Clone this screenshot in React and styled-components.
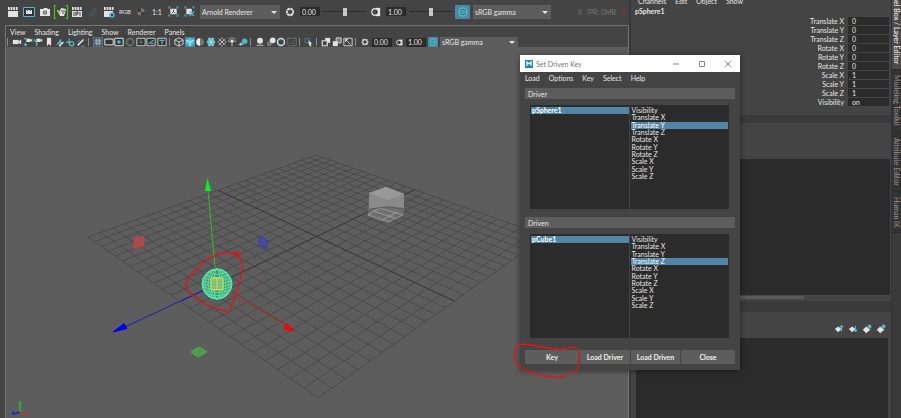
import styled, { createGlobalStyle } from 'styled-components';

const GlobalStyle = createGlobalStyle`
  * {
    box-sizing: border-box;
  }
  html,
  body {
    margin: 0;
    padding: 0;
    background: #444444;
  }
  body,
  button,
  input,
  select {
    font-family: Lato, 'Open Sans', 'Noto Sans', sans-serif;
    font-size: 7px;
    line-height: 8px;
    color: #e6e6e6;
  }
  button,
  input,
  select {
    margin: 0;
    padding: 0;
    border: 0;
    border-radius: 0;
    outline: none;
  }
`;

const Page = styled.div`
  position: relative;
  display: grid;
  grid-template-columns: minmax(0, 1fr) 262px 10px;
  min-height: 100vh;
  overflow: hidden;
  background: #444444;
`;

const Workspace = styled.main`
  display: flex;
  flex-direction: column;
  min-width: 0;
`;

const Shelf = styled.div`
  display: flex;
  align-items: center;
  gap: 3px;
  height: 23px;
  padding-left: 5px;
  overflow: hidden;
`;

const ShelfIcons = styled.div`
  display: flex;
`;

const IconButton = styled.button`
  display: flex;
  align-items: center;
  justify-content: center;
  flex: none;
  width: ${props => props.$w || 10}px;
  height: ${props => props.$h || 10}px;
  font-size: ${props => (props.$small ? 6 : 7)}px;
  background: ${props => (props.$on ? '#5285a6' : 'transparent')};
  opacity: ${props => (props.$dim ? 0.3 : 1)};
  svg {
    display: block;
    flex: none;
  }
`;

const NumberField = styled.input`
  flex: none;
  width: 20px;
  height: 9px;
  padding-left: 2px;
  background: #2b2b2b;
`;

const Slider = styled.input`
  appearance: none;
  flex: none;
  width: 43px;
  height: 10px;
  background: linear-gradient(#2a2a2a, #2a2a2a) center / 100% 1px no-repeat;
  &::-webkit-slider-thumb {
    appearance: none;
    width: 4px;
    height: 8px;
    background: #c8c8c8;
  }
`;

const Combo = styled.label`
  position: relative;
  flex: none;
  display: block;
  width: ${props => props.$w || 78}px;
  height: ${props => props.$h || 10}px;
  background: #5d5d5d;
  select {
    appearance: none;
    display: block;
    width: 100%;
    height: 100%;
    padding-left: 2px;
    background: transparent;
  }
  &::after {
    content: '';
    position: absolute;
    right: 3px;
    top: calc(50% - 1px);
    border: 3px solid transparent;
    border-top-color: #e4e4e4;
    border-bottom: 0;
    pointer-events: none;
  }
`;

const RenderStatus = styled.div`
  display: flex;
  align-items: center;
  gap: 5px;
  margin-left: 24px;
  color: #777777;
`;

const StatusDot = styled.span`
  width: 5px;
  height: 5px;
  border-radius: 1px;
  background: #693c3c;
`;

const Panel = styled.section`
  display: flex;
  flex: 1;
  flex-direction: column;
  margin: 2px 0 0 5px;
  border: solid #747474;
  border-width: 1px 1px 0 1px;
`;

const MenuBar = styled.nav`
  display: flex;
  align-items: center;
  gap: ${props => props.$gap || 9}px;
  height: 11px;
  padding-left: ${props => props.$left || 4}px;
  button {
    background: transparent;
    white-space: nowrap;
  }
`;

const PanelTools = styled.div`
  display: flex;
  align-items: center;
  gap: 2px;
  height: 10px;
  padding-left: 1px;
`;

const IconGroup = styled.div`
  display: flex;
  flex: none;
  justify-content: space-between;
  width: ${props => props.$w}px;
`;

const Divider = styled.span`
  flex: none;
  width: 3px;
  height: 8px;
  border-left: 1px solid #8c8c8c;
`;

const Scene = styled.div`
  flex: 1;
  min-height: 0;
  background: #5d5d5d;
  svg {
    display: block;
    width: 100%;
    height: auto;
  }
`;

const Sidebar = styled.aside`
  display: flex;
  flex-direction: column;
  border-left: 2px solid #393939;
`;

const ChannelMenu = styled.nav`
  display: flex;
  align-items: flex-end;
  gap: 9px;
  height: 5px;
  padding-left: 7px;
  overflow: hidden;
  button {
    flex: none;
    height: 9px;
    background: transparent;
  }
`;

const ChannelBox = styled.div`
  height: 110px;
  padding-left: 4px;
`;

const ObjectName = styled.div`
  height: 11px;
  padding-top: 2px;
  font-weight: 700;
`;

const ChannelRow = styled.label`
  display: flex;
  align-items: center;
  justify-content: flex-end;
  gap: 4px;
  height: 9px;
  padding-right: 2px;
  input {
    width: 41px;
    height: 8px;
    padding-left: 4px;
    background: #2b2b2b;
  }
`;

const Band = styled.div`
  flex: none;
  height: ${props => props.$h}px;
  background: ${props => props.$bg || '#444444'};
`;

const Well = styled.div`
  flex: ${props => (props.$h ? 'none' : 1)};
  height: ${props => (props.$h ? props.$h + 'px' : 'auto')};
  margin: 0 ${props => props.$right || 0}px 0 5px;
  background: #2b2b2b;
`;

const ScrollTrack = styled.div`
  height: 6px;
  padding: 1px 87px 2px 5px;
  background: #444444;
  &::before {
    content: '';
    display: block;
    height: 3px;
    background: #5a5a5a;
  }
`;

const LayerTools = styled.div`
  display: flex;
  align-items: center;
  justify-content: flex-end;
  gap: 4px;
  height: 26px;
  padding: 8px 5px 0 0;
`;

const SideTabs = styled.div`
  display: flex;
  flex-direction: column;
  border-left: 1px solid #333333;
  background: #3a3a3a;
`;

const SideTab = styled.button`
  display: flex;
  justify-content: ${props => (props.$on ? 'flex-end' : 'center')};
  align-items: center;
  height: ${props => props.$h}px;
  padding-bottom: ${props => (props.$on ? 5 : 0)}px;
  overflow: hidden;
  writing-mode: vertical-rl;
  white-space: nowrap;
  font-weight: ${props => (props.$on ? 700 : 400)};
  color: ${props => (props.$on ? '#dcdcdc' : '#969696')};
  background: ${props => (props.$on ? '#4a4a4a' : '#333333')};
  border-bottom: 1px solid #2b2b2b;
`;

/* floating window */
const Dialog = styled.section`
  position: absolute;
  left: 520px;
  top: 55px;
  width: 220px;
  background: #444444;
  box-shadow: 0 1px 6px rgba(0, 0, 0, 0.45);
`;

const TitleBar = styled.header`
  display: flex;
  align-items: center;
  gap: 3px;
  height: 17px;
  padding: 0 7px 0 5px;
  background: #ffffff;
  color: #777777;
`;

const Title = styled.h1`
  flex: 1;
  margin: 0;
  font-size: 7px;
  font-weight: 400;
`;

const WindowButtons = styled.div`
  display: flex;
  gap: 16px;
`;

const DialogBody = styled.div`
  padding: 5px 5px 6px;
`;

const FrameTitle = styled.h2`
  height: 11px;
  margin: 0;
  padding: 2px 3px 0;
  font-size: 7px;
  font-weight: 400;
  background: #5d5d5d;
`;

const ListPair = styled.div`
  display: grid;
  grid-template-columns: 1fr 1fr;
  gap: 2px;
  height: 104px;
  margin: 6px 6px 8px 5px;
  padding: 2px 1px 1px;
  background: linear-gradient(#444444, #444444) center / 1px 100% no-repeat #2b2b2b;
`;

const List = styled.ul`
  display: grid;
  grid-template-rows: repeat(10, 1fr);
  height: 73px;
  margin: 0;
  padding: 0;
  list-style: none;
  li {
    display: grid;
    min-height: 0;
  }
`;

const ListItem = styled.button`
  display: flex;
  align-items: center;
  min-height: 0;
  padding-left: 1px;
  line-height: 7px;
  font-weight: ${props => (props.$bold ? 700 : 400)};
  color: ${props => (props.$on ? '#ffffff' : '#e6e6e6')};
  background: ${props => (props.$on ? '#5285a6' : 'transparent')};
`;

const ButtonRow = styled.div`
  display: grid;
  grid-template-columns: 55fr 51fr 50fr 55fr;
  gap: 1px;
  margin-top: 12px;
`;

const ActionButton = styled.button`
  height: 14px;
  font-weight: 700;
  color: #eeeeee;
  background: #5d5d5d;
`;

const PenMark = styled.svg`
  position: absolute;
  left: -10px;
  bottom: -12px;
  pointer-events: none;
`;

const L = '#e2e2e2';
const T = '#4fb9cc';

const shapes = {
  clap: <><path d="M1 5h10v6H1z" fill={L} /><path d="M1 2.500h10" stroke={L} strokeWidth="3" strokeDasharray="1.800 .8" /></>,
  frame: <><path d="M.5 1.500h11v9H.5z" fill="#333" stroke={T} /><path d="M3 4h6v4H3z" fill={L} /><path d="M4.500 3v2M7.500 3v2" stroke="#555" /></>,
  photo: <><path d="M1 3h3l1-1h3l1 1h2v7H1z" fill={L} /><circle cx="6" cy="6.500" r="2" fill="#444" /><circle cx="6" cy="6.500" r="1" fill={L} /></>,
  arnold: <><path d="M1.500-.5H-.5v13h2M10.500-.5h2v13h-2" stroke="#43c522" fill="none" strokeWidth="1.200" /><path d="M2 4l3 1 1-3 5 1-1 4-1 3H5z" fill={L} /><path d="M1.500 4l4 2-1 3z" fill="#d2a63c" /><path d="M6 5h4M7 7h2" stroke="#555" /></>,
  ipr: <><path d="M1 5h10v6H1z" fill={L} /><path d="M1 2.500h10" stroke={L} strokeWidth="3" strokeDasharray="1.800 .8" /><path d="M3 6v4M5 10V6h2v2H5M9 6v4" stroke="#444" fill="none" /></>,
  clip: <path d="M3 8l4-5c2-1 3 1 2 2L5 10C3 11 1 9 3 8z" fill="none" stroke={T} />,
  settings: <><path d="M1 5h9v6H1z" fill={L} /><path d="M1 2.500h10" stroke={L} strokeWidth="3" strokeDasharray="1.800 .8" /><circle cx="9" cy="9" r="2" fill="#444" stroke={T} strokeWidth="1.500" /></>,
  checker: <><circle cx="6" cy="6" r="4.500" fill="#333" /><path d="M6 1.500a4.500 4.500 0 0 1 4.500 4.500H6zM6 10.500A4.500 4.500 0 0 1 1.500 6H6z" fill="#eee" /></>,
  region: <><path d="M1 3V1h2M9 1h2v2M11 9v2H9M3 11H1V9" stroke={T} fill="none" /><path d="M2.500 3h7v6h-7z" fill={L} /><path d="M6 4v2M4 8l2-2 2 2" stroke="#444" fill="none" /></>,
  regionOff: <><path d="M1 3V1h2M9 1h2v2M3 11H1V9" stroke={T} fill="none" /><path d="M2.500 3h6v6h-6z" fill={L} /><path d="M6 6l5 5M11 6l-5 5" stroke={T} strokeWidth="1.400" /></>,
  aperture: <><circle cx="6" cy="6" r="3.800" fill="none" stroke={L} strokeWidth="2.400" /><path d="M5 0l2 3M11 3L8 5M12 8L9 7M7 12L5 9M1 9l3-2M0 4l4 1" stroke="#444" strokeWidth=".8" /></>,
  gamma: <><path d="M5 1h6v10H5z" fill={L} /><path d="M5 3a3 3 0 0 1 0 6z" fill="#333" /><path d="M5 2a4 4 0 0 0 0 8" fill="none" stroke={L} strokeWidth="1.500" /></>,
  color: <><circle cx="6" cy="6" r="4.800" fill="#47707f" stroke="#3be0e0" strokeWidth="1.300" /><path d="M3 4.800h6M3 7.300h6" stroke="#3be0e0" strokeWidth="1.200" /></>,
  cam: <><path d="M1 3.500h7v5H1z" fill={L} /><path d="M7 6l4-3v6z" fill={L} /></>,
  camLock: <><path d="M4 2h5v4H4z" fill={L} /><path d="M8 4l3-2v4z" fill={L} /><path d="M1 2h3M3 7v4M1 9h4" stroke={T} strokeWidth="1.500" /></>,
  camAttr: <><path d="M4 2h5v4H4z" fill={L} /><path d="M8 4l3-2v4z" fill={L} /><path d="M1 3l4 5-1 3" stroke={T} strokeWidth="1.500" fill="none" /></>,
  bookmark: <path d="M3.500 1h5v10L6 8.500 3.500 11z" fill={L} />,
  plane: <><path d="M1 10L7 2l1 5z" fill={T} /><path d="M5 11l5-5" stroke={L} strokeWidth="2" /></>,
  pan: <><path d="M5 2v7M1 6h6" stroke={T} strokeWidth="1.500" /><circle cx="8" cy="8" r="2.500" fill="none" stroke={T} strokeWidth="1.500" /></>,
  pencil: <><path d="M2 10L9 3" stroke={L} strokeWidth="2" /><path d="M2 6l2-2M6 11h4" stroke={T} /></>,
  gridIcon: <><path d="M1.500 1.500h9v9h-9z" fill="#6c7d88" stroke="#333" /><path d="M1.500 4.500h9M1.500 7.500h9M4.500 1.500v9M7.500 1.500v9" stroke="#aebbc4" strokeWidth=".7" /></>,
  gate: <path d="M1 2.500h10v7H1z" fill="#333" stroke={L} strokeWidth="1.200" />,
  resGate: <><path d="M1 1.500h10v9H1z" fill="#333" stroke={L} strokeWidth="1.200" /><circle cx="6" cy="6" r="2.200" fill={T} /></>,
  chart: <><path d="M1 1.500h10v9H1z" fill="#333" stroke={L} /><path d="M3 6h6M6 3v6" stroke={T} strokeDasharray="2 1" /></>,
  action: <><path d="M1 1.500h10v9H1z" fill="#333" stroke={L} /><path d="M3 8l6-4M6 8h3" stroke={T} strokeWidth="1.500" /></>,
  title: <><path d="M1 1.500h10v9H1z" fill="#333" stroke={L} /><path d="M3 4h6M6 4v5" stroke={T} strokeWidth="1.500" /></>,
  cube: <path d="M6 1l5 2.500v5L6 11 1 8.500v-5zM1 3.500L6 6l5-2.500M6 6v5" fill="none" stroke={L} />,
  solid: <><path d="M6 1l5 2.500v5L6 11 1 8.500v-5z" fill="#45c8dc" /><path d="M1 3.500L6 6l5-2.500M6 6v5" stroke="#d5f5fa" fill="none" /></>,
  shade: <><circle cx="6" cy="6" r="4.500" fill="#777" /><path d="M6 1.500a4.500 4.500 0 0 0 0 9z" fill="#eee" /></>,
  texture: <><path d="M3 1h6l2 5-2 5H3L1 6z" fill={T} /><path d="M3 1l6 10M9 1L3 11M1 6h10" stroke={L} strokeWidth=".7" /></>,
  mesh: <path d="M6 1l5 5-5 5-5-5zM3.500 3.500l5 5M8.500 3.500l-5 5M2 2l8 8M10 2l-8 8" stroke={L} fill="none" strokeWidth=".7" />,
  light: <><circle cx="6" cy="5" r="2" fill={L} /><path d="M6 0v2M1 5h2M9 5h2M2 1l2 2M10 1L8 3M6 7v4" stroke={L} /></>,
  shadow: <><circle cx="8" cy="5" r="3.200" fill={T} /><path d="M0 9l5-3 2 4z" fill={T} /><circle cx="3" cy="9" r="1.200" fill={L} /></>,
  ao: <><circle cx="6" cy="4.500" r="3.500" fill={L} /><path d="M2 10h8" stroke="#aaa" strokeWidth="1.500" /></>,
  blur: <><circle cx="4" cy="8" r="3" fill="#777" /><circle cx="8" cy="4" r="3.500" fill={L} /></>,
  ring: <circle cx="6" cy="6" r="4.200" fill="none" stroke="#bfe2e8" strokeWidth="1.800" />,
  isolate: <><path d="M1 2h6v5H1z" stroke={T} fill="none" strokeDasharray="1 1" /><path d="M5 4l5 4H8l1 3H7L6 9z" fill={L} /></>,
  copy: <><path d="M5 1h6v6H5z" fill={L} /><path d="M1.500 4.500h6v6h-6z" fill="#444" stroke={L} strokeWidth="1.400" /></>,
  copyFill: <><path d="M5 1h6v6H5z" fill="#777" stroke={L} /><path d="M1 5h6v6H1z" fill={L} /></>,
  expand: <><path d="M1 1.500h10v9H1z" fill="none" stroke={L} /><path d="M3 3l6 6M6 3H3v3" stroke={L} fill="none" /></>,
  layer: <><path d="M1 6l4-3 4 3-4 4z" fill={L} /><path d="M9 2v7M7 4l2-2 2 2" stroke={T} strokeWidth="1.400" fill="none" /></>,
  layerDown: <><path d="M1 6l4-3 4 3-4 4z" fill={L} /><path d="M9 2v7M7 7l2 2 2-2" stroke={T} strokeWidth="1.400" fill="none" /></>,
  layerAdd: <><path d="M1 7l4-4 5 4-5 4z" fill={L} /><circle cx="9" cy="3" r="2.300" fill={T} /></>,
};

const Icon = ({ name, size = 10 }) => (
  <svg width={size} height={size} viewBox="0 0 12 12" overflow="visible" aria-hidden="true">
    {shapes[name]}
  </svg>
);

const Tool = ({ name, size, ...rest }) => (
  <IconButton type="button" aria-label={name} {...rest}>
    <Icon name={name} size={size} />
  </IconButton>
);

const Tools = ({ names, w, on, dim }) => (
  <IconGroup $w={w}>
    {names.map(name => (
      <Tool key={name} name={name} $on={name === on} $dim={name === dim} />
    ))}
  </IconGroup>
);

const Picker = ({ label, value, w, h }) => (
  <Combo $w={w} $h={h}>
    <select aria-label={label} defaultValue={value}>
      <option>{value}</option>
    </select>
  </Combo>
);

// ground plane corners: left, top, right, bottom
const corners = [[88, 237], [316, 155], [546, 236], [318, 398]];

const project = (u, v) => {
  const [[x0, y0], [x1, y1], [x2, y2], [x3, y3]] = corners;
  const dx1 = x1 - x2;
  const dx2 = x3 - x2;
  const sx = x0 - x1 + x2 - x3;
  const dy1 = y1 - y2;
  const dy2 = y3 - y2;
  const sy = y0 - y1 + y2 - y3;
  const det = dx1 * dy2 - dx2 * dy1;
  const g = (sx * dy2 - dx2 * sy) / det;
  const h = (dx1 * sy - sx * dy1) / det;
  const d = g * u + h * v + 1;
  return [
    ((x1 - x0 + g * x1) * u + (x3 - x0 + h * x3) * v + x0) / d,
    ((y1 - y0 + g * y1) * u + (y3 - y0 + h * y3) * v + y0) / d,
  ];
};

const segment = (a, b) => `M${a.join(' ')}L${b.join(' ')}`;

const CELLS = 24;
const steps = Array.from({ length: CELLS + 1 }, (_, i) => i / CELLS);
const gridPath = steps
  .map(t => segment(project(t, 0), project(t, 1)) + segment(project(0, t), project(1, t)))
  .join('');
const axisPath = segment(project(0.5, 0), project(0.5, 1)) + segment(project(0, 0.5), project(1, 0.5));

const Viewport = () => (
  <Scene>
    <svg viewBox="6 47 622 371" role="img" aria-label="persp">
      <path d={gridPath} stroke="#434343" strokeWidth=".7" />
      <path d={axisPath} stroke="#393939" />

      <path d="M369 193l17-6 18 7v20l-16 8-20-7z" fill="#888" opacity=".5" />
      <path d="M369 193l17-6 18 7v14l-16-2-19 3z" fill="#8a8a8a" />
      <path d="M369 193l17-6 18 7-16 6z" fill="#999" />
      <path d="M368 215l11-7 24 7-15 7zM373 211l22 7M383 220l14-8" fill="none" stroke="#a2a2a2" strokeWidth=".8" />
      <path d="M369 209l19-2 16 2" fill="none" stroke="#555" strokeWidth=".7" />

      <path d="M215 268L208 190" stroke="#3fb62c" />
      <path d="M207.500 178l3.500 13h-6z" fill="#00f51a" />
      <path d="M206 289L125 327" stroke="#1c1cb0" />
      <path d="M113 332l11-8.500 3 5z" fill="#0000f0" stroke="#0000f0" />
      <path d="M229 292L286 325" stroke="#c22020" />
      <path d="M295 332l-12-3 4-6z" fill="#ff0000" />
      <path d="M134 238l10-2v10l-10 3z" fill="#a84c4c" stroke="#b84444" />
      <path d="M259 236l8 4v9l-8-4z" fill="#4a4a9c" stroke="#3c3ca8" />
      <path d="M191 352l8-5 8 5-9 5z" fill="#4c9e4c" stroke="#4cb44c" />

      <circle cx="217" cy="284" r="15" fill="#4c9476" stroke="#5af0ac" />
      <g fill="none" stroke="#56efad" strokeWidth=".8">
        {[3, 6, 9, 12, 14].map(r => <ellipse key={r} cx="217" cy="284" rx={r} ry="15" />)}
        {[-12, -9, -6, -3, 0, 3, 6, 9, 12].map(y => {
          const r = Math.sqrt(225 - y * y);
          return <path key={y} d={`M${217 - r} ${284 + y}Q217 ${289 + y} ${217 + r} ${284 + y}`} />;
        })}
      </g>
      <path d="M211 278h12v12h-12zM217 278v12" fill="#8ec47c" fillOpacity=".7" stroke="#e5e53c" />
      <path
        d="M241 255L233 253Q220 251 207 260Q194 270 185 284Q188 292 192 295Q207 307 228 312Q231 310 234 299Q242 280 242 265L239 256L235 251M241 253L234 257"
        fill="none"
        stroke="#df1519"
        strokeWidth="1.300"
      />

      <path d="M20 412V401" stroke="#2cae34" strokeWidth="2" />
      <path d="M20 412l-6 2M13 411v4" stroke="#2222c2" strokeWidth="1.500" />
      <path d="M20 413l7 1M24 411l3 4M27 411l-3 4" stroke="#c83030" />
    </svg>
  </Scene>
);

const shelfLeft = ['clap', 'frame', 'photo', 'arnold', 'ipr', 'clip', 'settings'];

const attributes = [
  'Visibility', 'Translate X', 'Translate Y', 'Translate Z', 'Rotate X',
  'Rotate Y', 'Rotate Z', 'Scale X', 'Scale Y', 'Scale Z',
];

const channels = [
  ['Translate X', '0'], ['Translate Y', '0'], ['Translate Z', '0'],
  ['Rotate X', '0'], ['Rotate Y', '0'], ['Rotate Z', '0'],
  ['Scale X', '1'], ['Scale Y', '1'], ['Scale Z', '1'], ['Visibility', 'on'],
];

const AttributeLists = ({ title, node, selected }) => (
  <>
    <FrameTitle>{title}</FrameTitle>
    <ListPair>
      <List>
        <li><ListItem type="button" $on $bold>{node}</ListItem></li>
      </List>
      <List>
        {attributes.map(name => (
          <li key={name}>
            <ListItem type="button" $on={name === selected}>{name}</ListItem>
          </li>
        ))}
      </List>
    </ListPair>
  </>
);

const DrivenKeyDialog = () => (
  <Dialog role="dialog" aria-label="Set Driven Key">
    <TitleBar>
      <svg width="8" height="8" viewBox="0 0 8 8" aria-hidden="true">
        <path d="M0 0h8v8H0z" fill="#168c94" />
        <path d="M2 6V2l2 2 2-2v4" fill="none" stroke="#fff" strokeWidth="1.200" />
      </svg>
      <Title>Set Driven Key</Title>
      <WindowButtons>
        {['M2 5h6', 'M2.500 2.500h5v5h-5z', 'M2 2l6 6M8 2L2 8'].map((d, i) => (
          <IconButton key={d} type="button" aria-label={['Minimize', 'Maximize', 'Close window'][i]}>
            <svg width="10" height="10" viewBox="0 0 10 10">
              <path d={d} fill="none" stroke="#888" />
            </svg>
          </IconButton>
        ))}
      </WindowButtons>
    </TitleBar>
    <MenuBar $left={5}>
      {['Load', 'Options', 'Key', 'Select', 'Help'].map(item => (
        <button type="button" key={item}>{item}</button>
      ))}
    </MenuBar>
    <DialogBody>
      <AttributeLists title="Driver" node="pSphere1" selected="Translate Y" />
      <AttributeLists title="Driven" node="pCube1" selected="Translate Z" />
      <ButtonRow>
        {['Key', 'Load Driver', 'Load Driven', 'Close'].map(item => (
          <ActionButton type="button" key={item}>{item}</ActionButton>
        ))}
      </ButtonRow>
    </DialogBody>
    <PenMark width="76" height="42" viewBox="510 341 76 42">
      <path
        d="M576 348Q566 349 560 351L548 349L524 345Q516 345 514 354Q514 364 522 370Q528 373 537 375Q555 380 563 378Q567 374 577 371Q580 361 579 350"
        fill="none"
        stroke="#df1519"
        strokeWidth="1.300"
      />
    </PenMark>
  </Dialog>
);

const App = () => (
  <>
    <GlobalStyle />
    <Page>
      <Workspace>
        <Shelf>
          <ShelfIcons>
            {shelfLeft.map(name => (
              <Tool key={name} name={name} size={12} $w={16} $h={16} $dim={name === 'clip'} />
            ))}
            <IconButton type="button" $w={16} $h={16} $small>RGB</IconButton>
            <Tool name="checker" size={10} $w={16} $h={16} $dim />
            <IconButton type="button" $w={16} $h={16}>1:1</IconButton>
            <Tool name="region" size={11} $w={16} $h={16} />
            <Tool name="regionOff" size={11} $w={16} $h={16} />
          </ShelfIcons>
          <Picker label="Renderer" value="Arnold Renderer" w={80} h={14} />
          <Tool name="aperture" size={10} $w={14} $h={14} />
          <NumberField aria-label="Exposure" defaultValue="0.00" />
          <Slider type="range" aria-label="Exposure level" />
          <Tool name="gamma" size={10} $w={14} $h={14} />
          <NumberField aria-label="Gamma" defaultValue="1.00" />
          <Slider type="range" aria-label="Gamma level" />
          <Tool name="color" size={10} $w={15} $h={14} $on />
          <Picker label="View transform" value="sRGB gamma" h={14} />
          <RenderStatus>
            <span>II</span>
            <span>IPR: 0MB</span>
            <StatusDot />
          </RenderStatus>
        </Shelf>
        <Panel>
          <MenuBar>
            {['View', 'Shading', 'Lighting', 'Show', 'Renderer', 'Panels'].map(item => (
              <button type="button" key={item}>{item}</button>
            ))}
          </MenuBar>
          <PanelTools>
            <Divider />
            <Tools w={74} names={['cam', 'camLock', 'camAttr', 'bookmark', 'plane', 'pan', 'pencil']} />
            <Divider />
            <Tools w={74} names={['gridIcon', 'gate', 'resGate', 'ring', 'chart', 'action', 'title']} on="gridIcon" dim="ring" />
            <Divider />
            <Tools w={74} names={['cube', 'solid', 'shade', 'texture', 'mesh', 'light', 'shadow']} on="solid" />
            <Divider />
            <Tools w={42} names={['ao', 'blur', 'ring', 'action']} dim="action" />
            <Divider />
            <Tools w={10} names={['isolate']} />
            <Divider />
            <Tools w={32} names={['copy', 'copyFill', 'expand']} />
            <Divider />
            <Tool name="aperture" size={8} />
            <NumberField aria-label="Panel exposure" defaultValue="0.00" />
            <Tool name="gamma" size={7} />
            <NumberField aria-label="Panel gamma" defaultValue="1.00" />
            <Tool name="color" size={8} $on />
            <Picker label="Panel view transform" value="sRGB gamma" />
          </PanelTools>
          <Viewport />
        </Panel>
      </Workspace>

      <Sidebar>
        <ChannelMenu>
          {['Channels', 'Edit', 'Object', 'Show'].map(item => (
            <button type="button" key={item}>{item}</button>
          ))}
        </ChannelMenu>
        <ChannelBox>
          <ObjectName>pSphere1</ObjectName>
          {channels.map(([name, value]) => (
            <ChannelRow key={name}>
              {name}
              <input defaultValue={value} />
            </ChannelRow>
          ))}
        </ChannelBox>
        <Band $h={8} $bg="#3a3a3a" />
        <Band $h={36} />
        <Well $h={136} $right={1} />
        <ScrollTrack />
        <Band $h={11} $bg="#3a3a3a" />
        <LayerTools>
          <Tool name="layer" />
          <Tool name="layerDown" />
          <Tool name="layerAdd" />
          <Tool name="layerAdd" />
        </LayerTools>
        <Well $right={3} />
      </Sidebar>

      <SideTabs role="tablist">
        <SideTab type="button" role="tab" $h={70} $on>Channel Box / Layer Editor</SideTab>
        <SideTab type="button" role="tab" $h={63}>Modeling Toolkit</SideTab>
        <SideTab type="button" role="tab" $h={59}>Attribute Editor</SideTab>
        <SideTab type="button" role="tab" $h={41}>Human IK</SideTab>
      </SideTabs>

      <DrivenKeyDialog />
    </Page>
  </>
);

export default App;
